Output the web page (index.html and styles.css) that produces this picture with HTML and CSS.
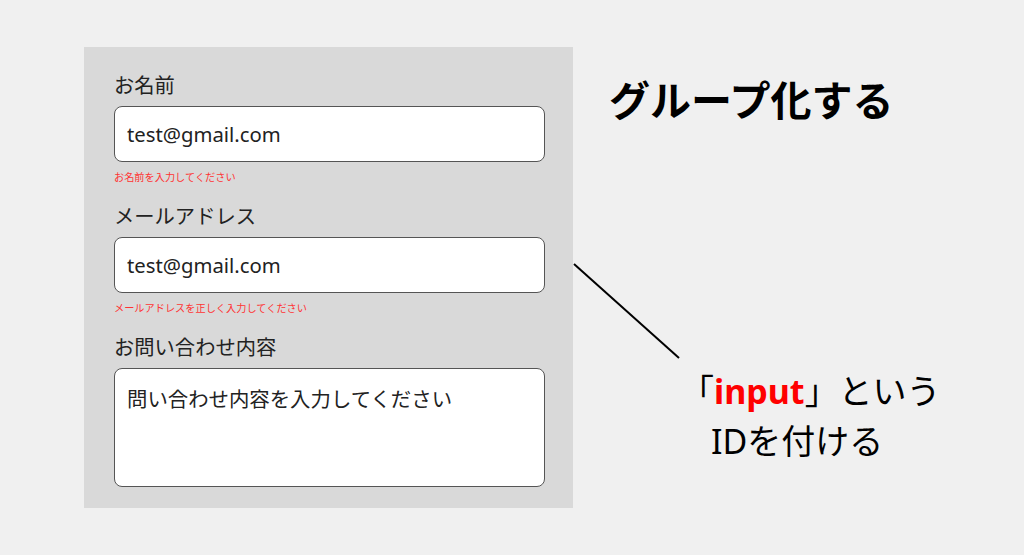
FILE: index.html
```html
<!DOCTYPE html>
<html lang="ja">
<head>
  <meta charset="utf-8" />
  <meta name="viewport" content="width=device-width, initial-scale=1" />
  <title>お問い合わせフォーム</title>
  <link rel="stylesheet" href="styles.css">
</head>
<body>
  <div class="page">
    <form class="form-group" onsubmit="return false;">
      <div class="field">
        <label class="label" for="name">お名前</label>
        <input class="input" id="name" type="text" value="test@gmail.com">
        <p class="error">お名前を入力してください</p>
      </div>
      <div class="field">
        <label class="label" for="mail">メールアドレス</label>
        <input class="input" id="mail" type="text" value="test@gmail.com">
        <p class="error">メールアドレスを正しく入力してください</p>
      </div>
      <div class="field">
        <label class="label" for="body">お問い合わせ内容</label>
        <textarea class="input textarea" id="body" placeholder="問い合わせ内容を入力してください"></textarea>
      </div>
    </form>

    <div class="note">
      <h2 class="note-title">グループ化する</h2>
      <svg class="pointer" width="110" height="96" viewBox="0 0 110 96">
        <line x1="1" y1="1" x2="106" y2="95" stroke="#000" stroke-width="2" />
      </svg>
      <p class="note-text">
        <span class="line">「<b class="id-name">input</b>」という</span>
        <span class="line indent">IDを付ける</span>
      </p>
    </div>
  </div>
</body>
</html>
```

FILE: styles.css
```css
body {
  margin: 0;
  background: #f0f0f0;
  font-family: "Noto Sans", "Noto Sans CJK JP", sans-serif;
  color: #111;
}
.page {
  display: flex;
  align-items: flex-start;
  padding: 47px 0 0 84px;
}

/* form panel */
.form-group {
  width: 489px;
  box-sizing: border-box;
  background: #d9d9d9;
  padding: 24px 28px 21px 30px;
}
.field { display: flex; flex-direction: column; }
.field + .field { margin-top: 18px; }
.label {
  font-size: 20.3px;
  line-height: 28px;
  color: #222;
  margin-bottom: 7px;
}
.input {
  box-sizing: border-box;
  width: 431px;
  height: 56px;
  padding: 0 12px;
  border: 1px solid #555;
  border-radius: 8px;
  background: #fff;
  font-family: inherit;
  font-size: 20.3px;
  color: #222;
  outline: none;
}
.textarea {
  height: 119px;
  padding: 16px 12px;
  font-size: 20.4px;
  line-height: 28px;
  resize: none;
}
.textarea::placeholder { color: #222; opacity: 1; }
.error {
  margin: 8px 0 0;
  font-size: 10.2px;
  line-height: 14px;
  color: #f33;
}

/* annotation */
.note { margin-top: 25px; }
.note-title {
  margin: 0 0 0 36px;
  font-size: 41px;
  line-height: 56px;
  font-weight: bold;
  color: #000;
}
.pointer { display: block; margin-top: 135px; }
.note-text {
  margin: 7px 0 0 107px;
  font-size: 34px;
  line-height: 50px;
  color: #000;
}
.line { display: block; white-space: nowrap; }
.indent { padding-left: 31px; }
.id-name { color: #f00; font-weight: bold; }
```
